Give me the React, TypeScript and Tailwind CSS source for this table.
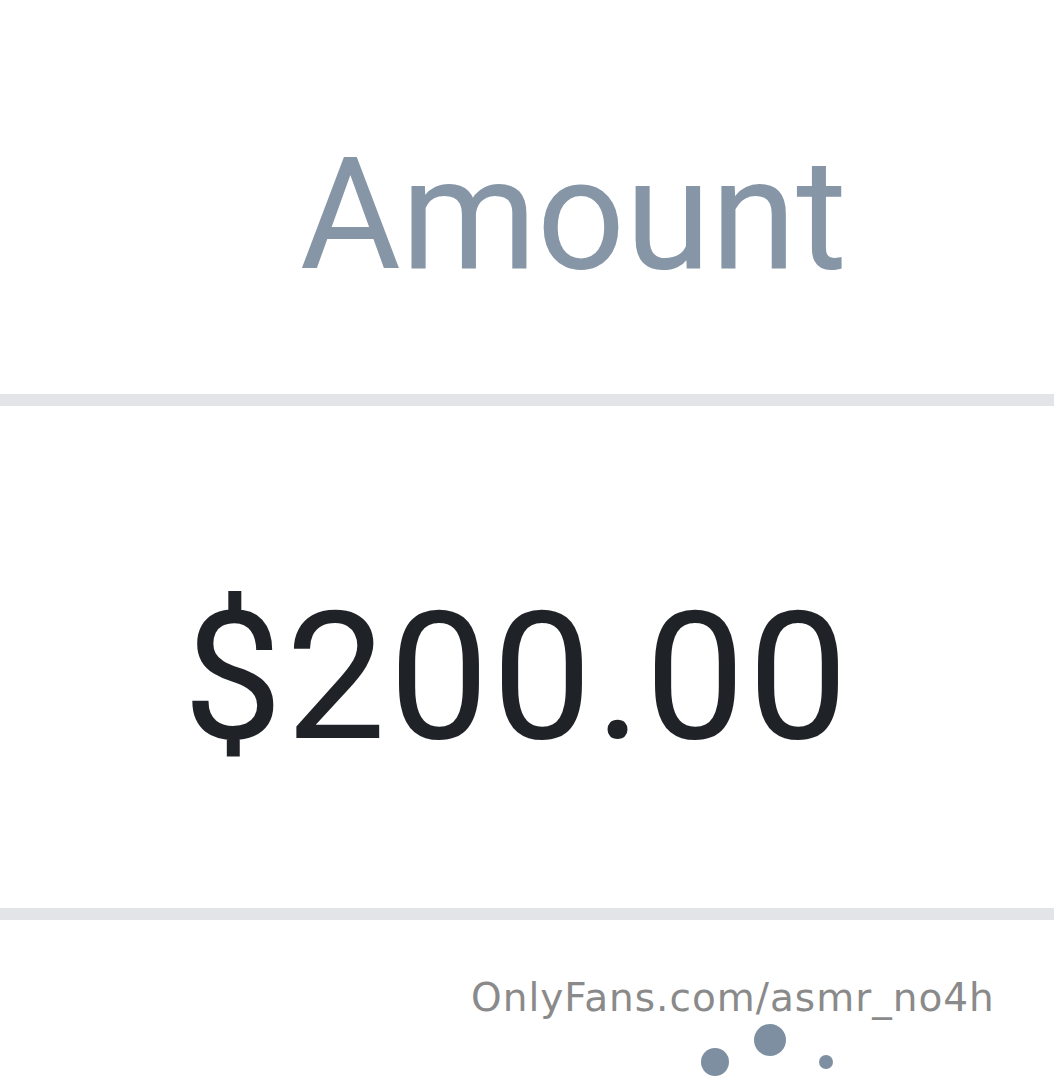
import React from "react";

export default function App() {
    return (
        <main className="w-[1054px] h-[1080px] bg-white overflow-hidden flex flex-col" style={{ fontFamily: "Roboto, 'Liberation Sans', sans-serif" }}>
            {/* table head */}
            <div className="h-[394px] flex items-end justify-end pr-[207px] pb-[101px]">
                <span className="text-[155px] leading-none text-[#8796a6] font-['Roboto',sans-serif]">Amount</span>
            </div>
            <div className="h-[12px] bg-[#e2e4e8]" />

            {/* table body */}
            <div className="h-[502px] flex items-center justify-end pr-[203px] pt-[40px]">
                <span className="text-[178px] leading-none text-[#1f2226] font-['Roboto',sans-serif] tracking-[3px]">$200.00</span>
            </div>
            <div className="h-[12px] bg-[#e2e4e8]" />

            {/* watermark */}
            <div className="flex-1 relative">
                <span className="absolute left-[471px] top-[58px] text-[39px] leading-none text-[#8a8a8a] font-['DejaVu_Sans',sans-serif] tracking-[1px]">
                    OnlyFans.com/asmr_no4h
                </span>
                <svg className="absolute left-[690px] top-[100px]" width="160" height="64" viewBox="0 0 160 64">
                    <circle cx="25" cy="42" r="14" fill="#7d8fa1" />
                    <circle cx="80" cy="20" r="16" fill="#7d8fa1" />
                    <circle cx="136" cy="42" r="7" fill="#7d8fa1" />
                </svg>
            </div>
        </main>
    );
}
